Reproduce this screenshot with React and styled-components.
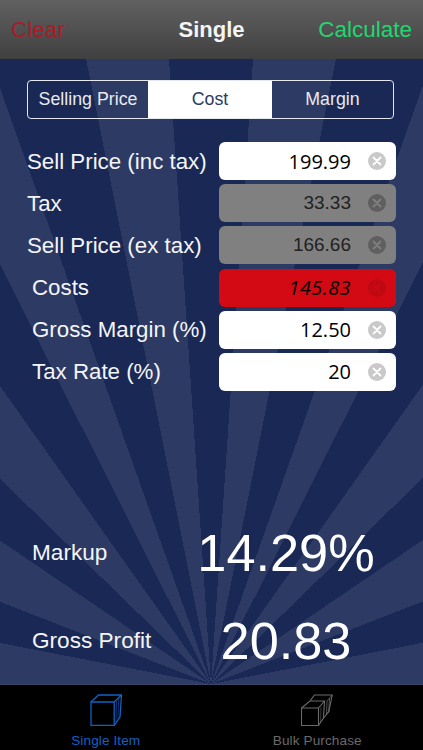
import React from "react";
import styled, { createGlobalStyle } from "styled-components";

const Global = createGlobalStyle`
  html, body { margin: 0; padding: 0; background: #000; }
  body { font-family: "Liberation Sans", Arial, sans-serif; }
`;

const DARK = "#1a2855";
const LIGHT = "#2d3a63";
const rayEdges = [3.85, 11.3, 19.5, 26.7, 35.3, 45.8, 55.8, 68.7, 79, 90];
const rightRays = rayEdges.map((end, i) => {
  const start = i === 0 ? 0 : rayEdges[i - 1];
  return `${i % 2 ? LIGHT : DARK} ${start}deg ${end}deg`;
});
const leftRays = [...rayEdges].reverse().map((end, i, all) => {
  const next = i === all.length - 1 ? 0 : all[i + 1];
  return `${(all.length - 1 - i) % 2 ? LIGHT : DARK} ${360 - end}deg ${360 - next}deg`;
});
const sunburst = `conic-gradient(at 211px 100%, ${rightRays.join(", ")}, ${LIGHT} 90deg 270deg, ${leftRays.join(", ")})`;

const Screen = styled.div`
  width: 423px;
  height: 750px;
  display: flex;
  flex-direction: column;
  overflow: hidden;
  color: #fff;
`;

const NavBar = styled.header`
  height: 59px;
  flex: none;
  box-sizing: border-box;
  padding: 1px 11px 0 11px;
  display: grid;
  grid-template-columns: 1fr auto 1fr;
  align-items: center;
  font-size: 22.5px;
  background: linear-gradient(#616161, #404040);
`;

const NavClear = styled.span`
  color: #a81c28;
`;

const NavTitle = styled.span`
  color: #f4f4f4;
  font-weight: 700;
  font-size: 22px;
`;

const NavCalc = styled.span`
  color: #22d671;
  justify-self: end;
`;

const Main = styled.main`
  height: 626px;
  flex: none;
  display: flex;
  flex-direction: column;
  box-sizing: border-box;
  padding: 21px 27px 0;
  border-bottom: 1px solid #3a4566;
  background: ${sunburst};
`;

const Segments = styled.div`
  width: 367px;
  height: 39px;
  flex: none;
  box-sizing: border-box;
  display: grid;
  grid-template-columns: 120px 124px 1fr;
  border: 1px solid #e6e8ef;
  border-radius: 4px;
  overflow: hidden;
  margin-bottom: 23px;
`;

const Segment = styled.div`
  display: flex;
  align-items: center;
  justify-content: center;
  font-size: 17.8px;
  padding-bottom: 1px;
  color: ${(p) => (p.$active ? "#2c3a63" : "#e8eaf0")};
  background: ${(p) => (p.$active ? "#fff" : "transparent")};
`;

const Rows = styled.div`
  flex: none;
  display: flex;
  flex-direction: column;
  gap: 4.2px;
`;

const Row = styled.div`
  display: grid;
  grid-template-columns: 192px 177px;
  align-items: center;
  height: 38px;
`;

const Label = styled.span`
  font-size: 22.3px;
  color: #f4f5f8;
  padding-left: ${(p) => (p.$indent ? "5px" : "0")};
  padding-top: 1px;
  white-space: nowrap;
`;

const fieldColors = {
  white: "#fff",
  grey: "#808080",
  red: "#d30a14",
};

const Field = styled.div`
  height: 38px;
  box-sizing: border-box;
  border-radius: 6px;
  display: flex;
  align-items: center;
  justify-content: flex-end;
  gap: 17px;
  padding-right: 10px;
  background: ${(p) => fieldColors[p.$tone]};
`;

const FieldValue = styled.span`
  font-size: ${(p) => (p.$tone === "grey" ? "19px" : "20px")};
  letter-spacing: ${(p) => (p.$tone === "red" ? "0.4px" : "0")};
  font-style: ${(p) => (p.$tone === "red" ? "italic" : "normal")};
  font-family: ${(p) => (p.$spaced ? '"Open Sans", "Liberation Sans", sans-serif' : '"Liberation Sans", sans-serif')};
  color: ${(p) => (p.$tone === "grey" ? "#222" : "#000")};
`;

const ClearDot = styled.svg`
  width: 18px;
  height: 18px;
  flex: none;
  display: block;
`;

const Results = styled.div`
  flex: 1;
  min-height: 0;
  display: flex;
  flex-direction: column;
  padding-top: 118px;
`;

const ResultRow = styled.div`
  display: grid;
  grid-template-columns: 165px 178px;
  align-items: center;
  padding-left: 5px;
  height: 88px;
  flex: none;
`;

const ResultLabel = styled.span`
  font-size: 22.6px;
  color: #f4f5f8;
`;

const ResultValue = styled.span`
  font-size: 52.3px;
  color: #fff;
  text-align: center;
  white-space: nowrap;
`;

const TabBar = styled.nav`
  height: 65px;
  flex: none;
  background: #000;
  display: grid;
  grid-template-columns: 1fr 1fr;
`;

const Tab = styled.div`
  display: flex;
  flex-direction: column;
  align-items: center;
  padding-top: 9px;
  box-sizing: border-box;
  color: ${(p) => (p.$active ? "#1260c4" : "#6a6a6a")};
`;

const TabIcon = styled.svg`
  width: 32px;
  height: 32px;
  flex: none;
  display: block;
  fill: none;
  stroke: currentColor;
  stroke-width: 1.1;
`;

const TabLabel = styled.span`
  font-size: 13.6px;
  letter-spacing: 0.1px;
  line-height: 15px;
  margin-top: 7px;
  white-space: nowrap;
`;

const Clear = ({ tone }) => {
  const bg = tone === "white" ? "#c9c9c9" : tone === "grey" ? "#5f5f5f" : "#bf0912";
  const fg = tone === "white" ? "#fff" : tone === "grey" ? "#808080" : "#c80a13";
  return (
    <ClearDot viewBox="0 0 18 18">
      <circle cx="9" cy="9" r="9" fill={bg} />
      <path d="M5.5 5.5 L12.5 12.5 M12.5 5.5 L5.5 12.5" stroke={fg} strokeWidth="1.8" strokeLinecap="round" />
    </ClearDot>
  );
};

const rows = [
  { label: "Sell Price (inc tax)", value: "199.99", tone: "white", spaced: true },
  { label: "Tax", value: "33.33", tone: "grey" },
  { label: "Sell Price (ex tax)", value: "166.66", tone: "grey" },
  { label: "Costs", value: "145.83", tone: "red", spaced: true, indent: true },
  { label: "Gross Margin (%)", value: "12.50", tone: "white", spaced: true, indent: true },
  { label: "Tax Rate (%)", value: "20", tone: "white", spaced: true, indent: true },
];

export default function App() {
  return (
    <Screen>
      <Global />
      <NavBar>
        <NavClear>Clear</NavClear>
        <NavTitle>Single</NavTitle>
        <NavCalc>Calculate</NavCalc>
      </NavBar>
      <Main>
        <Segments>
          <Segment>Selling Price</Segment>
          <Segment $active>Cost</Segment>
          <Segment>Margin</Segment>
        </Segments>
        <Rows>
          {rows.map((r) => (
            <Row key={r.label}>
              <Label $indent={r.indent}>{r.label}</Label>
              <Field $tone={r.tone}>
                <FieldValue $tone={r.tone} $spaced={r.spaced}>{r.value}</FieldValue>
                <Clear tone={r.tone} />
              </Field>
            </Row>
          ))}
        </Rows>
        <Results>
          <ResultRow>
            <ResultLabel>Markup</ResultLabel>
            <ResultValue>14.29%</ResultValue>
          </ResultRow>
          <ResultRow>
            <ResultLabel>Gross Profit</ResultLabel>
            <ResultValue>20.83</ResultValue>
          </ResultRow>
        </Results>
      </Main>
      <TabBar>
        <Tab $active>
          <TabIcon viewBox="0 0 32 32">
            <path d="M1 8 H24.2 V31.5 H1 Z" strokeWidth="1.3" />
            <path d="M1 8 L8.5 1 H31.5 L24.2 8" strokeWidth="1.3" />
            <path d="M31.5 1 L30 23 L24.2 31.5" strokeWidth="1.3" />
            <path d="M26.5 7 L26 28 M28.7 4.5 L28 25" strokeWidth="0.8" opacity="0.7" />
          </TabIcon>
          <TabLabel>Single Item</TabLabel>
        </Tab>
        <Tab>
          <TabIcon viewBox="0 0 32 32">
            <path d="M0.5 14 H17.5 V31.5 H0.5 Z" />
            <path d="M0.5 14 L9 7 H23.5 L17.5 14" />
            <path d="M23.5 7 L22.5 24 L17.5 31.5" />
            <path d="M9.2 6.7 L13.5 1 H31.2 L27.8 17.7 L22.5 24" />
            <path d="M31.2 1 L26 7 M26 7 L25.5 21 M28.5 4 L27.7 18" strokeWidth="0.8" />
            <path d="M20 13 L19.5 29" strokeWidth="0.7" opacity="0.7" />
          </TabIcon>
          <TabLabel>Bulk Purchase</TabLabel>
        </Tab>
      </TabBar>
    </Screen>
  );
}
